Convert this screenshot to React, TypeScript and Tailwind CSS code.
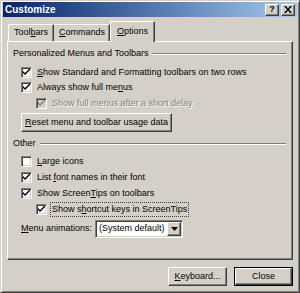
import React from 'react'

const font = "font-['Liberation_Sans',Arial,sans-serif]"

// classic raised 3D button edge
const raised =
  'border border-t-white border-l-white border-r-[#404040] border-b-[#404040] shadow-[inset_-1px_-1px_0_#808080,inset_1px_1px_0_#d4d0c8]'

const U = ({ children }: { children: React.ReactNode }) => <span className="underline underline-offset-[1px]">{children}</span>

const CheckBox = ({ checked, disabled }: { checked: boolean; disabled?: boolean }) => (
  <div
    className={`w-[11px] h-[11px] flex-shrink-0 border border-t-[#808080] border-l-[#808080] border-r-white border-b-white shadow-[inset_1px_1px_0_#404040,inset_-1px_-1px_0_#d4d0c8] flex items-center justify-center ${
      disabled ? 'bg-[#d4d0c8]' : 'bg-white'
    }`}
  >
    {checked && (
      <svg width="7" height="7" viewBox="0 0 7 7">
        <path d="M0 2 L0 4 L2 6 L7 1 L7 -1 L2 4 Z" fill={disabled ? '#808080' : '#000'} />
      </svg>
    )}
  </div>
)

const CheckRow = ({
  checked,
  disabled,
  indent,
  focused,
  short,
  children,
}: {
  checked: boolean
  disabled?: boolean
  indent?: boolean
  focused?: boolean
  short?: boolean
  children: React.ReactNode
}) => (
  <div className={`${short ? 'h-[15px]' : 'h-[16px]'} flex items-center gap-[3px] ${indent ? 'pl-[28px]' : 'pl-[13px]'}`}>
    <CheckBox checked={checked} disabled={disabled} />
    <span
      className={`whitespace-nowrap px-[1px] leading-[13px] ${
        focused ? 'border border-dotted border-[#404040]' : 'border border-transparent'
      } ${disabled ? 'text-[#808080] [text-shadow:1px_1px_0_#fff]' : 'text-black'}`}
    >
      {children}
    </span>
  </div>
)

const GroupHeader = ({ title }: { title: string }) => (
  <div className="h-[14px] flex items-center gap-[4px] pl-[5px] pr-[6px]">
    <span className="whitespace-nowrap">{title}</span>
    <div className="flex-1 h-[2px] border-t border-t-[#808080] border-b border-b-white" />
  </div>
)

export default function App() {
  return (
    <div
      className={`${font} text-[9px] text-black w-[300px] h-[293px] bg-[#d4d0c8] border border-t-[#d4d0c8] border-l-[#d4d0c8] border-r-[#404040] border-b-[#404040] shadow-[inset_1px_1px_0_#fff,inset_-1px_-1px_0_#808080] pt-[1px] px-[2px] pb-[2px] flex flex-col overflow-hidden select-none`}
    >
      {/* title bar */}
      <div className="h-[15px] flex-shrink-0 flex items-center justify-between bg-gradient-to-r from-[#0a246a] to-[#a6caf0] pl-[2px] pr-[2px]">
        <span className="text-white font-bold text-[10px] leading-none">Customize</span>
        <div className="flex gap-[2px]">
          <div className={`w-[14px] h-[12px] bg-[#d4d0c8] ${raised} flex items-center justify-center font-bold text-[9px] leading-none`}>?</div>
          <div className={`w-[14px] h-[12px] bg-[#d4d0c8] ${raised} flex items-center justify-center`}>
            <svg width="8" height="7" viewBox="0 0 8 7">
              <path d="M0 0h2l2 2.5L6 0h2L5 3.5 8 7H6L4 4.5 2 7H0l3-3.5z" fill="#000" />
            </svg>
          </div>
        </div>
      </div>

      {/* tabs */}
      <div className="flex items-end pl-[5px] mt-[4px] h-[20px] flex-shrink-0">
        <div className="h-[17px] px-[5px] flex items-center border border-b-0 border-t-white border-l-white border-r-[#404040] rounded-tl-[2px] shadow-[inset_-1px_0_0_#808080]">
          <span className="w-[34px]">Tool<U>b</U>ars</span>
        </div>
        <div className="h-[17px] px-[5px] flex items-center border border-b-0 border-l-0 border-t-white border-r-[#404040] shadow-[inset_-1px_0_0_#808080]">
          <span className="w-[45px]"><U>C</U>ommands</span>
        </div>
        <div className="h-[21px] px-[6px] -mb-[1px] relative z-10 bg-[#d4d0c8] flex items-center border border-b-0 border-l-white border-t-white border-r-[#404040] shadow-[inset_-1px_0_0_#808080]">
          <span className="w-[31px]"><U>O</U>ptions</span>
        </div>
      </div>

      {/* tab panel */}
      <div className="ml-[4px] mr-[4px] h-[219px] flex-shrink-0 border border-t-white border-l-white border-r-[#404040] border-b-[#404040] shadow-[inset_-1px_-1px_0_#808080] pt-[5px] flex flex-col">
        <GroupHeader title="Personalized Menus and Toolbars" />
        <div className="h-[3px]" />
        <CheckRow checked>
          <U>S</U>how Standard and Formatting toolbars on two rows
        </CheckRow>
        <CheckRow checked short>
          Always show full me<U>n</U>us
        </CheckRow>
        <CheckRow checked disabled indent>
          Show full menus after a short delay
        </CheckRow>
        <div className="pl-[13px] mt-[2px]">
          <div className={`w-[151px] h-[19px] ${raised} flex items-center justify-center`}>
            <span><U>R</U>eset menu and toolbar usage data</span>
          </div>
        </div>
        <div className="h-[5px]" />
        <GroupHeader title="Other" />
        <div className="h-[2px]" />
        <CheckRow checked={false}>
          <U>L</U>arge icons
        </CheckRow>
        <CheckRow checked>
          List <U>f</U>ont names in their font
        </CheckRow>
        <CheckRow checked>
          Show Screen<U>T</U>ips on toolbars
        </CheckRow>
        <CheckRow checked indent focused>
          Show s<U>h</U>ortcut keys in ScreenTips
        </CheckRow>
        <div className="h-[20px] mt-[2px] flex items-center pl-[13px] gap-[3px]">
          <span className="whitespace-nowrap"><U>M</U>enu animations:</span>
          <div className="w-[88px] h-[18px] bg-white border border-t-[#808080] border-l-[#808080] border-r-white border-b-white shadow-[inset_1px_1px_0_#404040,inset_-1px_-1px_0_#d4d0c8] flex items-center p-[1px]">
            <span className="flex-1 pl-[2px] whitespace-nowrap">(System default)</span>
            <div className={`w-[14px] h-full bg-[#d4d0c8] ${raised} flex items-center justify-center`}>
              <svg width="7" height="4" viewBox="0 0 7 4">
                <path d="M0 0h7L3.5 4z" fill="#000" />
              </svg>
            </div>
          </div>
        </div>
      </div>

      {/* bottom buttons */}
      <div className="flex justify-end gap-[7px] mr-[4px] mt-[7px]">
        <div className={`w-[59px] h-[19px] ${raised} flex items-center justify-center`}>
          <span><U>K</U>eyboard...</span>
        </div>
        <div className="w-[59px] h-[19px] border border-black">
          <div className={`w-full h-full ${raised} flex items-center justify-center`}>
            <span>Close</span>
          </div>
        </div>
      </div>
    </div>
  )
}
